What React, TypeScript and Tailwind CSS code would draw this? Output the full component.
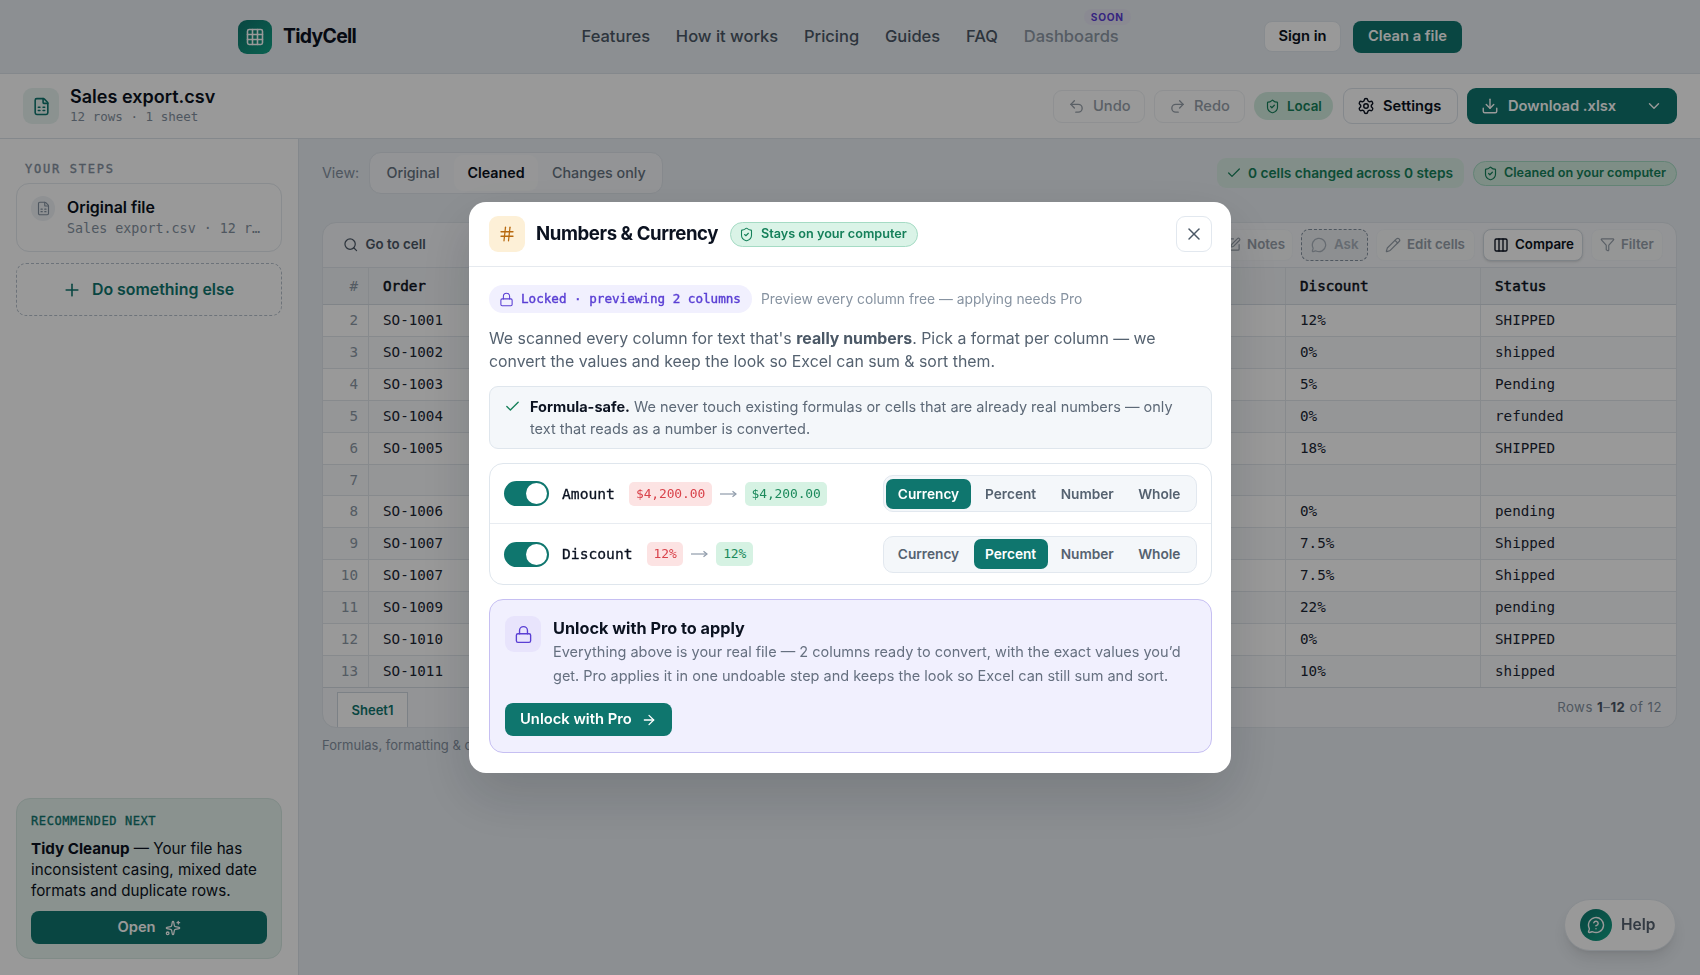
import React from "react";
import {
  ArrowRight, Check, ChevronDown, Columns3, Download, FileSpreadsheet, Filter, Grid3x3, Hash, Lock,
  MessageCircle, MessageCircleQuestion, Pencil, Plus, Redo2, Search, Settings, ShieldCheck, Sparkles,
  SquarePen, Undo2, X,
} from "lucide-react";

const mono = "font-['DejaVu_Sans_Mono',monospace]";

const rows: [number, string, string, string][] = [
  [2, "SO-1001", "12%", "SHIPPED"],
  [3, "SO-1002", "0%", "shipped"],
  [4, "SO-1003", "5%", "Pending"],
  [5, "SO-1004", "0%", "refunded"],
  [6, "SO-1005", "18%", "SHIPPED"],
  [7, "", "", ""],
  [8, "SO-1006", "0%", "pending"],
  [9, "SO-1007", "7.5%", "Shipped"],
  [10, "SO-1007", "7.5%", "Shipped"],
  [11, "SO-1009", "22%", "pending"],
  [12, "SO-1010", "0%", "SHIPPED"],
  [13, "SO-1011", "10%", "shipped"],
];

function Header() {
  return (
    <header className="flex h-[74px] shrink-0 items-center border-b border-[#dde3e9] bg-[#e9eef3] pr-[238px] pl-[238px]">
      <div className="flex h-[34px] w-[34px] items-center justify-center rounded-[9px] bg-linear-to-br from-[#0f766e] to-[#12a386] text-white">
        <Grid3x3 size={20} strokeWidth={1.9} />
      </div>
      <span className="ml-[11px] w-[74px] text-[19.4px] font-bold tracking-[-0.7px] text-[#0b1220]">TidyCell</span>
      <nav className="ml-[224.5px] flex gap-[25.8px] text-[16.5px] font-medium text-[#4b5866]">
        <span>Features</span>
        <span>How it works</span>
        <span>Pricing</span>
        <span>Guides</span>
        <span>FAQ</span>
        <span className="relative text-[#8e99a6]">
          Dashboards
          <span className="absolute -top-[15px] -right-[12px] rounded-full bg-[#e7e7f4] px-[7px] text-[10.2px] leading-[16px] font-bold tracking-[0.7px] text-[#5b3fd6]">
            SOON
          </span>
        </span>
      </nav>
      <div className="ml-auto flex items-center gap-[12px] text-[14.7px] font-semibold">
        <button className="h-[31px] w-[77px] rounded-[8px] border border-[#e2e8ee] bg-white text-[#0b1220]">Sign in</button>
        <button className="h-[32px] w-[109px] rounded-[8px] bg-[#0f766e] text-white">Clean a file</button>
      </div>
    </header>
  );
}

function FileBar() {
  return (
    <div className="flex h-[65px] shrink-0 items-center border-b border-[#dde3e9] bg-white pr-[23px] pl-[23px]">
      <div className="flex h-[36px] w-[36px] items-center justify-center rounded-[9px] bg-[#e8f4f1] text-[#0f766e]">
        <FileSpreadsheet size={19} strokeWidth={2} />
      </div>
      <div className="ml-[11px]">
        <div className="text-[18px] leading-[22px] font-semibold tracking-[0.02px] text-[#0b1220]">Sales export.csv</div>
        <div className={`${mono} text-[12.56px] leading-[18px] text-[#8491a0]`}>12 rows · 1 sheet</div>
      </div>
      <div className="ml-auto flex items-center text-[14.7px] font-semibold">
        <button className="flex h-[33px] w-[92px] items-center rounded-[9px] border border-[#eef1f4] pl-[14px] font-medium text-[#97a0aa]">
          <Undo2 size={17} strokeWidth={1.9} />
          <span className="ml-[8px]">Undo</span>
        </button>
        <button className="ml-[9px] flex h-[33px] w-[91px] items-center rounded-[9px] border border-[#eef1f4] pl-[14px] font-medium text-[#97a0aa]">
          <Redo2 size={17} strokeWidth={1.9} />
          <span className="ml-[8px]">Redo</span>
        </button>
        <span className="ml-[9px] flex h-[28px] w-[79px] items-center rounded-full bg-[#d3ede0] pl-[11px] text-[13.4px] text-[#15805a]">
          <ShieldCheck size={15} strokeWidth={1.9} />
          <span className="ml-[7px]">Local</span>
        </span>
        <button className="ml-[10px] flex h-[36px] w-[115px] items-center rounded-[9px] border border-[#dce3ea] bg-white pl-[13px] text-[#0b1220]">
          <Settings size={18} strokeWidth={1.9} />
          <span className="ml-[8px]">Settings</span>
        </button>
        <button className="ml-[9px] flex h-[36px] w-[210px] items-center rounded-[9px] bg-[#0f766e] pl-[14px] text-white">
          <Download size={18} strokeWidth={1.9} />
          <span className="ml-[9px] flex-1 text-left">Download .xlsx</span>
          <ChevronDown size={18} strokeWidth={1.9} className="mr-[14px]" />
        </button>
      </div>
    </div>
  );
}

function Sidebar() {
  return (
    <aside className="flex w-[299px] shrink-0 flex-col border-r border-[#dde3e9] bg-white px-[16px] pt-[23px] pb-[16px]">
      <div className={`${mono} pl-[9px] text-[12px] leading-[14px] tracking-[1.75px] text-[#8491a0] [-webkit-text-stroke:0.35px]`}>YOUR STEPS</div>
      <div className="mt-[7px] flex h-[69px] items-start gap-[12px] rounded-[13px] border border-[#e4e9ee] px-[14px] pt-[12px]">
        <span className="flex h-[25px] w-[24px] shrink-0 items-center justify-center rounded-full bg-[#eef2f6] text-[#8491a0]">
          <FileSpreadsheet size={15} strokeWidth={1.8} />
        </span>
        <div className="min-w-0">
          <div className="text-[15.9px] leading-[24px] font-semibold text-[#0b1220]">Original file</div>
          <div className={`${mono} text-[13.36px] leading-[18px] whitespace-nowrap text-[#8491a0]`}>Sales export.csv · 12 r…</div>
        </div>
      </div>
      <button className="mt-[11px] flex h-[53px] items-center justify-center gap-[10px] rounded-[10px] border border-dashed border-[#b6c0cb] pr-[2px] text-[15.9px] font-semibold text-[#0f766e]">
        <Plus size={20} strokeWidth={1.9} />
        Do something else
      </button>
      <div className="mt-auto flex h-[161px] flex-col rounded-[14px] border border-[#d6e8e2] bg-[#e6f3ef] px-[14px] pt-[15px]">
        <div className={`${mono} text-[12px] leading-[14px] tracking-[0.6px] text-[#0f766e] [-webkit-text-stroke:0.35px]`}>RECOMMENDED NEXT</div>
        <p className="mt-[10px] text-[15.2px] leading-[21px] whitespace-nowrap text-[#0b1220]">
          <b className="font-bold">Tidy Cleanup</b> — Your file has
          <br />
          inconsistent casing, mixed date
          <br />
          formats and duplicate rows.
        </p>
        <button className="mt-[10px] flex h-[33px] items-center justify-center gap-[9px] rounded-[8px] bg-[#0f766e] text-[14.7px] font-semibold text-white">
          Open
          <Sparkles size={16} strokeWidth={1.9} />
        </button>
      </div>
    </aside>
  );
}

function ViewBar() {
  return (
    <div className="flex h-[42px] items-center">
      <span className="w-[37px] text-[14.3px] text-[#8491a0]">View:</span>
      <div className="ml-[10px] flex h-[42px] w-[294px] items-center rounded-[12px] border border-[#dfe5eb] bg-[#f5f7fa] px-[2px] text-[14.3px] font-medium text-[#667381]">
        <span className="w-[82px] text-center">Original</span>
        <span className="w-[84px] rounded-[9px] bg-[#fafbfc] py-[7px] text-center font-semibold text-[#0b1220]">Cleaned</span>
        <span className="ml-[14px]">Changes only</span>
      </div>
      <span className="ml-auto flex h-[30px] w-[247px] items-center rounded-[9px] bg-[#d9ede4] pl-[9px] text-[13.72px] font-semibold text-[#15805a]">
        <Check size={16} strokeWidth={1.9} />
        <span className="ml-[6px]">0 cells changed across 0 steps</span>
      </span>
      <span className="ml-[9px] flex h-[25px] w-[204px] items-center rounded-full border border-[#a5dbc4] bg-[#d3ede0] pl-[9px] text-[12.63px] font-semibold text-[#15805a]">
        <ShieldCheck size={15} strokeWidth={1.9} />
        <span className="ml-[6px]">Cleaned on your computer</span>
      </span>
    </div>
  );
}

function Grid() {
  const idx = "w-[46px] shrink-0 border-r border-[#e2e7ec] pr-[10px] text-right text-[#8c98a5]";
  const cell = "shrink-0 border-l border-[#e2e7ec] pl-[14px]";
  return (
    <div className={`${mono} text-[14.24px] text-[#1b2634]`}>
      <div className="flex h-[37px] items-stretch border-b border-[#d5dce3] bg-[#f1f4f7] leading-[36px] text-[#0b1220]">
        <span className={idx}>#</span>
        <span className="flex-1 pl-[14px] [-webkit-text-stroke:0.5px]">Order</span>
        <span className={`${cell} w-[195px] [-webkit-text-stroke:0.5px]`}>Discount</span>
        <span className={`${cell} w-[196px] [-webkit-text-stroke:0.5px]`}>Status</span>
      </div>
      {rows.map(([n, order, discount, status], i) => (
        <div
          key={n}
          className={`flex items-stretch border-b border-[#e2e7ec] leading-[30px] last:border-[#d5dce3] ${order ? "h-[32px]" : "h-[31px]"} ${i % 2 ? "bg-[#f8fafc]" : "bg-white"}`}
        >
          <span className={idx}>{n}</span>
          <span className="flex-1 pl-[14px]">{order}</span>
          <span className={`${cell} w-[195px]`}>{discount}</span>
          <span className={`${cell} w-[196px]`}>{status}</span>
        </div>
      ))}
    </div>
  );
}

function Sheet() {
  const ghost = "flex h-[32px] items-center rounded-[8px] border border-[#f1f4f7] bg-[#f8fafb] text-[#97a0aa]";
  return (
    <section className="mt-[28px] flex h-[506px] flex-col overflow-hidden rounded-[14px] border border-[#dfe5eb] bg-[#f5f7fa]">
      <div className="flex h-[45px] items-center border-b border-[#dfe5eb] pr-[13px] pb-[1px] pl-[20px] text-[13.35px] font-semibold">
        <span className="flex items-center gap-[7px] text-[#4b5866]">
          <Search size={15.5} strokeWidth={1.9} />
          Go to cell
        </span>
        <div className="ml-auto flex items-center gap-[8px]">
          <span className={`${ghost} w-[77px] pl-[9px]`}>
            <SquarePen size={15} strokeWidth={1.9} />
            <span className="ml-[6px]">Notes</span>
          </span>
          <span className="flex h-[32px] w-[67px] items-center rounded-[8px] border border-dashed border-[#8491a0] bg-[#eceff2] pl-[9px] text-[#aab3bd]">
            <MessageCircle size={16} strokeWidth={1.9} />
            <span className="ml-[7px]">Ask</span>
          </span>
          <span className={`${ghost} w-[99px] pl-[8px]`}>
            <Pencil size={16} strokeWidth={1.8} />
            <span className="ml-[6px]">Edit cells</span>
          </span>
          <span className="flex h-[32px] w-[100px] items-center rounded-[8px] border border-[#d3dae2] bg-white pl-[9px] text-[#0b1220] shadow-sm">
            <Columns3 size={16} strokeWidth={2} />
            <span className="ml-[6px]">Compare</span>
          </span>
          <span className={`${ghost} w-[72px] pl-[8px]`}>
            <Filter size={15} strokeWidth={1.9} />
            <span className="ml-[6px]">Filter</span>
          </span>
        </div>
      </div>
      <Grid />
      <div className="flex flex-1 items-end justify-between pr-[14px] pl-[14px]">
        <span className="h-[35px] w-[71px] border border-b-0 border-[#cfd7df] bg-white text-center text-[13.04px] leading-[35px] font-semibold text-[#0f766e]">Sheet1</span>
        <span className="self-center text-[13.2px] tracking-[0.5px] text-[#8491a0]">
          Rows <b className="font-bold text-[#4b5866]">1</b>–<b className="font-bold text-[#4b5866]">12</b> of 12
        </span>
      </div>
    </section>
  );
}

function Segmented({ active }: { active: string }) {
  const options: [string, string][] = [
    ["Currency", "w-[85px]"],
    ["Percent", "w-[74px]"],
    ["Number", "w-[74px]"],
    ["Whole", "w-[65px]"],
  ];
  return (
    <div className="ml-auto flex h-[37px] w-[314px] items-center gap-[2.6px] rounded-[10px] border border-[#e2e8ef] bg-[#f4f7fa] px-[2px] text-[13.68px] font-semibold text-[#556270]">
      {options.map(([name, width]) => (
        <span key={name} className={`${width} rounded-[7px] text-center leading-[30px] ${name === active ? "bg-[#0f766e] text-white" : ""}`}>
          {name}
        </span>
      ))}
    </div>
  );
}

function ColumnRow({ name, before, after, format, className }: { name: string; before: string; after: string; format: string; className: string }) {
  return (
    <div className={`flex items-center px-[14px] ${className}`}>
      <span className="flex h-[25px] w-[45px] items-center justify-end rounded-full bg-[#0f766e] pr-[2px]">
        <span className="h-[21px] w-[21px] rounded-full bg-white" />
      </span>
      <span className={`${mono} ml-[13px] text-[14.67px] text-[#0b1220] [-webkit-text-stroke:0.3px]`}>{name}</span>
      <span className={`${mono} ml-[14px] rounded-[5px] bg-[#fce3e3] pr-[6.5px] pl-[7px] text-[12.95px] leading-[24px] tracking-[-0.11px] text-[#d9434b]`}>{before}</span>
      <svg className="mx-[8px] text-[#8f9baa]" width="17" height="10" viewBox="0 0 17 10" fill="none" stroke="currentColor" strokeWidth="1.2">
        <path d="M0 5H15.5" />
        <path d="M12.5 2.2L16 5L12.5 7.8" />
      </svg>
      <span className={`${mono} rounded-[5px] bg-[#d6f2e3] pr-[6.5px] pl-[7px] text-[12.95px] leading-[24px] tracking-[-0.11px] text-[#1c8a5c]`}>{after}</span>
      <Segmented active={format} />
    </div>
  );
}

function Modal() {
  return (
    <div className="fixed inset-0 flex items-center justify-center bg-black/40">
      <div className="h-[571px] w-[762px] rounded-[17px] bg-white shadow-[0_22px_54px_rgba(11,18,32,0.16)]">
        <div className="flex h-[65px] items-center border-b border-[#e6eaef] pr-[19px] pl-[20px]">
          <span className="flex h-[36px] w-[36px] items-center justify-center rounded-[9px] bg-[#fdf0d7] text-[#b8690f]">
            <Hash size={18} strokeWidth={1.7} />
          </span>
          <h2 className="ml-[11px] w-[183px] text-[18.6px] font-bold tracking-[-0.41px] whitespace-nowrap text-[#0b1220]">Numbers &amp; Currency</h2>
          <span className="ml-[11px] flex h-[25px] w-[188px] items-center rounded-full border border-[#a5dbc4] bg-[#daf3e7] pl-[8px] text-[12.65px] font-semibold text-[#15805a]">
            <ShieldCheck size={15} strokeWidth={1.7} />
            <span className="ml-[7px]">Stays on your computer</span>
          </span>
          <button className="ml-auto flex h-[36px] w-[36px] items-center justify-center rounded-[9px] border border-[#e2e8ef] text-[#4b5866]">
            <X size={20} strokeWidth={1.8} />
          </button>
        </div>
        <div className="pt-[18px] pr-[19px] pl-[20px]">
          <div className="flex items-center">
            <span className={`${mono} flex h-[28px] w-[263px] items-center rounded-full bg-[#f1f0fe] pl-[10px] text-[12.6px] text-[#5a3fd4] [-webkit-text-stroke:0.4px]`}>
              <Lock size={15} strokeWidth={1.7} />
              <span className="ml-[7px] whitespace-nowrap">Locked · previewing 2 columns</span>
            </span>
            <span className="ml-[9px] text-[13.82px] text-[#8793a1]">Preview every column free — applying needs Pro</span>
          </div>
          <p className="mt-[14px] text-[15.86px] leading-[23px] whitespace-nowrap text-[#556270]">
            We scanned every column for text that's <b className="font-bold text-[#4b5866]">really numbers</b>. Pick a format per column — we
            <br />
            convert the values and keep the look so Excel can sum &amp; sort them.
          </p>
          <div className="mt-[13px] flex h-[63px] rounded-[9px] border border-[#dfe6ed] bg-[#f4f7fa] pt-[9px] pl-[14px]">
            <Check size={17} strokeWidth={1.9} className="mt-[2px] text-[#15805a]" />
            <p className="ml-[9px] text-[14.5px] leading-[21.5px] whitespace-nowrap text-[#5d6977]">
              <b className="font-bold text-[#0b1220]">Formula-safe.</b> We never touch existing formulas or cells that are already real numbers — only
              <br />
              text that reads as a number is converted.
            </p>
          </div>
          <div className="mt-[14px] h-[122px] rounded-[14px] border border-[#dfe6ed]">
            <ColumnRow name="Amount" before="$4,200.00" after="$4,200.00" format="Currency" className="h-[60px] border-b border-[#e8ecf1]" />
            <ColumnRow name="Discount" before="12%" after="12%" format="Percent" className="h-[60px]" />
          </div>
          <div className="mt-[14px] h-[154px] rounded-[14px] border border-[#c6bff2] bg-[#f1f0fe] px-[15px] pt-[16px]">
            <div className="flex">
              <span className="flex h-[36px] w-[36px] items-center justify-center rounded-[9px] bg-[#e8e4fc] text-[#5a3fd4]">
                <Lock size={19} strokeWidth={1.7} />
              </span>
              <div className="ml-[12px]">
                <div className="text-[16.26px] leading-[24px] font-bold text-[#0b1220]">Unlock with Pro to apply</div>
                <p className="text-[14.5px] leading-[24px] whitespace-nowrap text-[#667080]">
                  Everything above is your real file — 2 columns ready to convert, with the exact values you’d
                  <br />
                  get. Pro applies it in one undoable step and keeps the look so Excel can still sum and sort.
                </p>
              </div>
            </div>
            <button className="mt-[15px] flex h-[33px] w-[167px] items-center rounded-[8px] bg-[#0f766e] pl-[15px] text-[14.75px] font-semibold text-white">
              Unlock with Pro
              <ArrowRight size={16} strokeWidth={1.9} className="ml-[9px]" />
            </button>
          </div>
        </div>
      </div>
    </div>
  );
}

export default function App() {
  return (
    <div className="flex h-[975px] w-[1700px] flex-col overflow-hidden bg-[#e9eef3] font-['Inter',sans-serif]">
      <Header />
      <FileBar />
      <div className="flex min-h-0 flex-1">
        <Sidebar />
        <main className="min-w-0 flex-1 px-[23px] pt-[13px]">
          <ViewBar />
          <Sheet />
          <p className="mt-[8px] text-[13px] leading-[18px] text-[#8491a0]">Formulas, formatting &amp; comments</p>
        </main>
      </div>
      <div className="fixed right-[24px] bottom-[24px] flex h-[52px] w-[112px] items-center rounded-full border border-[#e2e8ee] bg-white pl-[15px] shadow-lg">
        <span className="flex h-[32px] w-[32px] items-center justify-center rounded-full bg-linear-to-br from-[#0f766e] to-[#12a386] text-white">
          <MessageCircleQuestion size={18} strokeWidth={1.9} />
        </span>
        <span className="ml-[9px] text-[15.5px] font-semibold text-[#556270]">Help</span>
      </div>
      <Modal />
    </div>
  );
}
